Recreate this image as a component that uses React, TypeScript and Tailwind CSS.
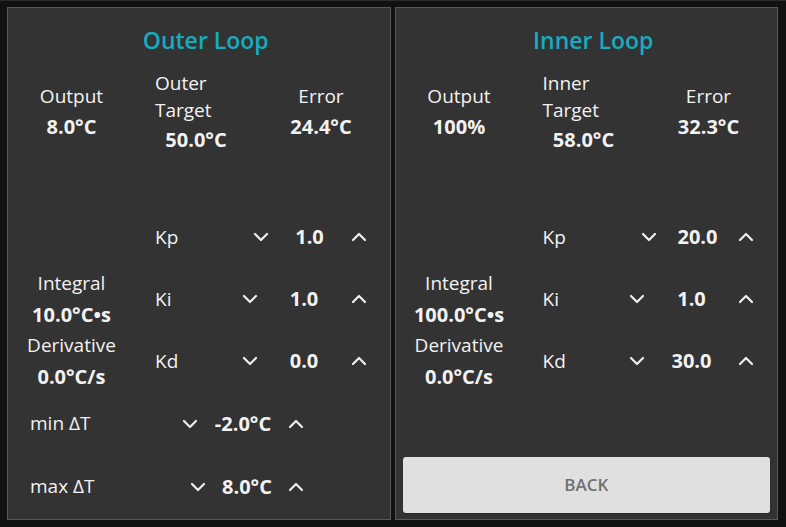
import React from 'react';

const Chevron: React.FC<{ up?: boolean }> = ({ up }) => (
  <svg width="16" height="10" viewBox="0 0 16 10" fill="none" stroke="#f0f0f0" strokeWidth="2.2" strokeLinecap="round" strokeLinejoin="round">
    {up ? <polyline points="2,8 8,2 14,8" /> : <polyline points="2,2 8,8 14,2" />}
  </svg>
);

const Stepper: React.FC<{ value: string; w: string }> = ({ value, w }) => (
  <div className="flex items-center">
    <button className="w-[24px] h-[32px] flex items-center justify-center">
      <Chevron />
    </button>
    <div className={`${w} text-center font-bold text-[20px]`}>{value}</div>
    <button className="w-[24px] h-[32px] flex items-center justify-center">
      <Chevron up />
    </button>
  </div>
);

const Stat: React.FC<{ label: string; value: string }> = ({ label, value }) => (
  <div className="w-[127px] flex flex-col items-center">
    <div className="leading-[27px]">{label}</div>
    <div className="leading-[34px] font-bold text-[20px]">{value}</div>
  </div>
);

type Gain = { name: string; value: string; w: string };

const Panel: React.FC<{
  title: string;
  output: string;
  target: string;
  targetValue: string;
  error: string;
  integral: string;
  derivative: string;
  gains: Gain[];
  footer: React.ReactNode;
}> = ({ title, output, target, targetValue, error, integral, derivative, gains, footer }) => (
  <div className="flex-1 flex flex-col bg-[#333333] border border-[#585858]">
    <h2 className="pt-[16px] leading-[32px] text-[23px] font-semibold text-[#17abbf] text-center pl-[14px]">{title}</h2>

    <div className="mt-[2px] h-[110px] flex items-center">
      <Stat label="Output" value={output} />
      <div className="ml-[20px] w-[82px] flex flex-col">
        <div className="leading-[27px] w-[70px]">{target}</div>
        <div className="leading-[32px] font-bold text-[20px] text-center">{targetValue}</div>
      </div>
      <div className="ml-[24px] w-[120px] flex flex-col items-center">
        <div className="leading-[27px]">Error</div>
        <div className="leading-[34px] font-bold text-[20px]">{error}</div>
      </div>
    </div>

    <div className="mt-[38px] flex flex-col">
      {gains.map((g, i) => (
        <div key={g.name} className="h-[62px] flex items-center">
          <div className="w-[127px] flex flex-col items-center">
            {i === 1 && (
              <>
                <div className="leading-[31px]">Integral</div>
                <div className="leading-[31px] font-bold text-[20px]">{integral}</div>
              </>
            )}
            {i === 2 && (
              <>
                <div className="leading-[31px]">Derivative</div>
                <div className="leading-[31px] font-bold text-[20px]">{derivative}</div>
              </>
            )}
          </div>
          <div className="ml-[20px] flex-1">{g.name}</div>
          <div className="mr-[19px]">
            <Stepper value={g.value} w={g.w} />
          </div>
        </div>
      ))}
    </div>
    {footer}
  </div>
);

const App: React.FC = () => {
  return (
    <div
      className="w-[786px] h-[527px] bg-[#111111] border-t border-[#2a2a2a] p-[7px] pt-[6px] pr-[8px] flex gap-[4px] text-[19px] text-[#f2f2f2]"
      style={{ fontFamily: '"Open Sans", "Noto Sans", sans-serif' }}
    >
      <Panel
        title="Outer Loop"
        output="8.0°C"
        target="Outer Target"
        targetValue="50.0°C"
        error="24.4°C"
        integral="10.0°C•s"
        derivative="0.0°C/s"
        gains={[
          { name: 'Kp', value: '1.0', w: 'w-[74px]' },
          { name: 'Ki', value: '1.0', w: 'w-[85px]' },
          { name: 'Kd', value: '0.0', w: 'w-[85px]' },
        ]}
        footer={
          <div className="flex flex-col">
            <div className="h-[63px] pl-[22px] w-[300px] flex items-center justify-between">
              <span>min ΔT</span>
              <Stepper value="-2.0°C" w="w-[82px]" />
            </div>
            <div className="h-[63px] pl-[22px] w-[300px] flex items-center justify-between">
              <span>max ΔT</span>
              <Stepper value="8.0°C" w="w-[74px]" />
            </div>
          </div>
        }
      />
      <Panel
        title="Inner Loop"
        output="100%"
        target="Inner Target"
        targetValue="58.0°C"
        error="32.3°C"
        integral="100.0°C•s"
        derivative="0.0°C/s"
        gains={[
          { name: 'Kp', value: '20.0', w: 'w-[73px]' },
          { name: 'Ki', value: '1.0', w: 'w-[85px]' },
          { name: 'Kd', value: '30.0', w: 'w-[85px]' },
        ]}
        footer={
          <button className="mt-auto mx-[7px] mb-[6px] h-[56px] rounded-[3px] bg-[#e0e0e0] text-[#707070] text-[17px] font-semibold shadow-sm">
            BACK
          </button>
        }
      />
    </div>
  );
};

export default App;
